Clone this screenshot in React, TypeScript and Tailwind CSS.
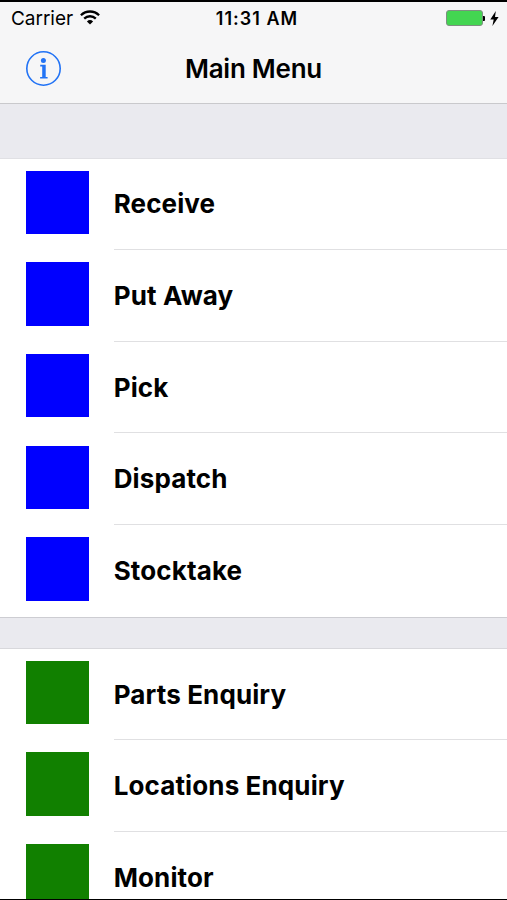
interface MenuItem {
  label: string;
  color: string;
}

const operations: MenuItem[] = [
  { label: 'Receive', color: 'bg-[#0000ff]' },
  { label: 'Put Away', color: 'bg-[#0000ff]' },
  { label: 'Pick', color: 'bg-[#0000ff]' },
  { label: 'Dispatch', color: 'bg-[#0000ff]' },
  { label: 'Stocktake', color: 'bg-[#0000ff]' },
];

const enquiries: MenuItem[] = [
  { label: 'Parts Enquiry', color: 'bg-[#118000]' },
  { label: 'Locations Enquiry', color: 'bg-[#118000]' },
  { label: 'Monitor', color: 'bg-[#118000]' },
];

function WifiIcon() {
  return (
    <svg className="w-5 h-[15px] mb-0.5" viewBox="0 0 20 15" fill="none" stroke="#000" strokeWidth="2.3">
      <path d="M0.9 5.2a13 13 0 0 1 18.2 0" />
      <path d="M4.2 8.6a8.3 8.3 0 0 1 11.6 0" />
      <path d="M10 14.6l-3.1-3.2a4.5 4.5 0 0 1 6.2 0z" fill="#000" stroke="none" />
    </svg>
  );
}

function Battery() {
  return (
    <div className="flex items-center mb-px">
      <div className="w-[37px] h-4 rounded-[3px] border border-[#7d8f80] bg-[#43d551]" />
      <div className="w-[2px] h-[5px] rounded-r-[1px] bg-black" />
      <svg className="ml-[5px] w-[9px] h-[15px]" viewBox="0 0 9 15">
        <path d="M5.8 0L0.3 8.5h3.4L2.4 15 8.6 5.9H5z" fill="#000" />
      </svg>
    </div>
  );
}

function StatusBar() {
  return (
    <div className="grid grid-cols-[1fr_auto_1fr] items-center h-8 pl-[11px] pr-2">
      <div className="flex items-center gap-[7px]">
        <span className="pt-px text-[19px] leading-8 tracking-[-0.02px]">Carrier</span>
        <WifiIcon />
      </div>
      <span className="pl-1 text-center text-[18px] leading-8 font-semibold tracking-[1px]">11:31 AM</span>
      <div className="flex justify-end">
        <Battery />
      </div>
    </div>
  );
}

function NavBar() {
  return (
    <div className="grid grid-cols-[1fr_auto_1fr] items-center h-[68px] px-[26px]">
      <button className="w-[35px] h-[35px]" aria-label="Info">
        <svg className="w-[35px] h-[35px]" viewBox="0 0 35 35">
          <circle cx="17.5" cy="17.5" r="16.7" fill="none" stroke="#2273f5" strokeWidth="1.6" />
          <circle cx="17.4" cy="9.5" r="2.5" fill="#2273f5" />
          <path d="M14.2 13.8h5.5v12.1h1.9v1.6h-7.5v-1.6h2.1V15.4h-2z" fill="#2273f5" />
        </svg>
      </button>
      <h1 className="text-[26px] font-semibold tracking-[-0.25px]">Main Menu</h1>
    </div>
  );
}

function MenuSection({ items }: { items: MenuItem[] }) {
  return (
    <ul className="bg-white">
      {items.map((item, i) => (
        <li key={item.label} className="flex h-[91.67px] pl-[26px]">
          <div className={`mt-[12.1px] mr-[24.3px] w-[63.4px] h-[63.4px] shrink-0 ${item.color}`} />
          <div className={`flex flex-1 items-center ${i < items.length - 1 ? 'border-b border-[#e0e0e2]' : ''}`}>
            <span className="text-[26px] font-bold tracking-[0.12px]">{item.label}</span>
          </div>
        </li>
      ))}
    </ul>
  );
}

export default function App() {
  return (
    <div className="flex flex-col h-[900px] w-[507px] overflow-hidden border-t-2 border-b border-black bg-[#eaeaef] text-black font-['Inter',sans-serif]">
      <header className="shrink-0 h-[102px] border-b border-[#c9c9cc] bg-[#f6f6f7]">
        <StatusBar />
        <NavBar />
      </header>
      <main className="flex-1 min-h-0 overflow-hidden pt-[53.5px]">
        <div className="border-y border-t-[#e0e0e4] border-b-[#cdcdd2]">
          <MenuSection items={operations} />
        </div>
        <div className="mt-[29.9px] border-t border-[#d8d8dc]">
          <MenuSection items={enquiries} />
        </div>
      </main>
    </div>
  );
}
